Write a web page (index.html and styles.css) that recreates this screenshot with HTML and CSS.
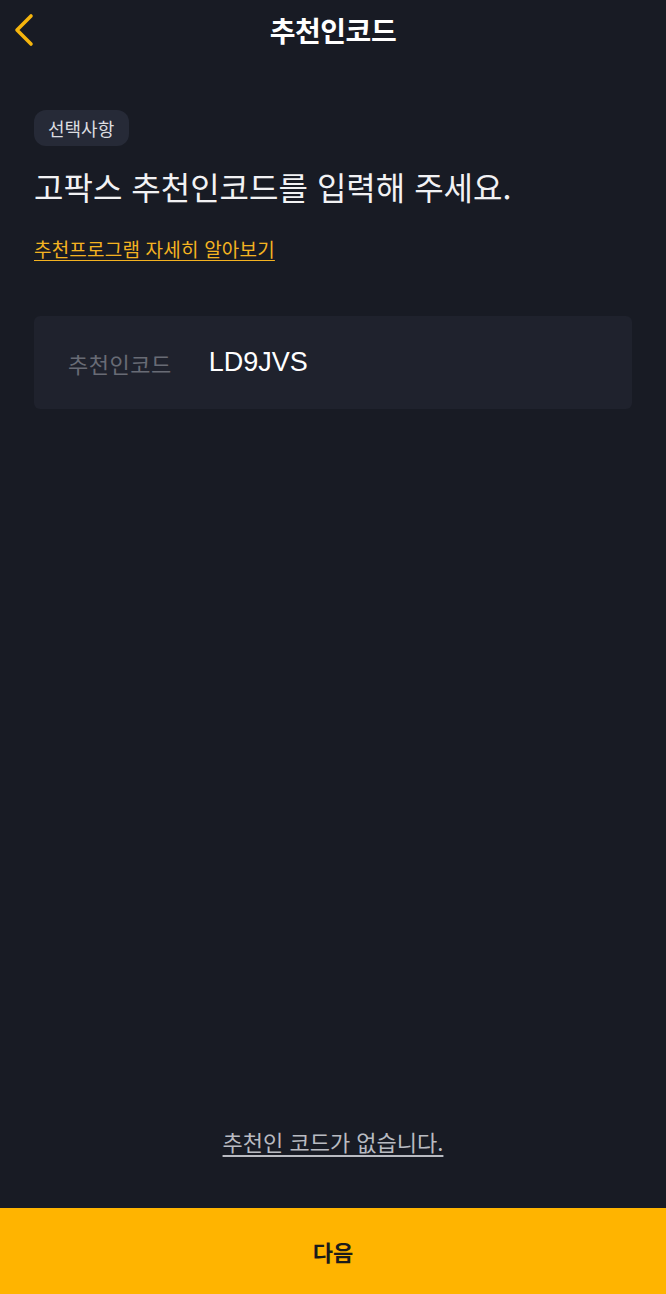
FILE: index.html
```html
<!DOCTYPE html>
<html lang="ko">
<head>
    <meta charset="UTF-8">
    <title>추천인코드</title>
    <link rel="stylesheet" href="styles.css">
</head>
<body>
    <div class="page">
        <!-- top bar -->
        <header class="topbar">
            <a class="back" href="#">
                <svg width="22" height="34" viewBox="0 0 22 34">
                    <path d="M18 3 L4 17 L18 31" fill="none" stroke="#f5b50d" stroke-width="3.6" stroke-linecap="round" stroke-linejoin="round"/>
                </svg>
            </a>
            <h1 class="title">추천인코드</h1>
        </header>

        <main class="content">
            <span class="badge">선택사항</span>
            <h2 class="heading">고팍스 추천인코드를 입력해 주세요.</h2>
            <a class="more" href="#">추천프로그램 자세히 알아보기</a>

            <div class="field">
                <span class="field-label">추천인코드</span>
                <span class="field-value">LD9JVS</span>
            </div>
        </main>

        <a class="skip" href="#">추천인 코드가 없습니다.</a>
        <button class="next" type="button">다음</button>
    </div>
</body>
</html>
```

FILE: styles.css
```css
html, body {
    margin: 0;
    padding: 0;
    background-color: #181b24;
}

body {
    font-family: "Noto Sans CJK KR", "Noto Sans", sans-serif;
    color: #ffffff;
}

.page {
    height: 1294px;
    display: flex;
    flex-direction: column;
}

.topbar {
    height: 60px;
    display: flex;
    align-items: center;
    justify-content: center;
    position: relative;
}

.back {
    position: absolute;
    left: 13px;
    top: 13px;
    display: block;
}

.title {
    margin: 0;
    font-size: 28px;
    font-weight: 700;
    line-height: 36px;
    letter-spacing: -0.5px;
    color: #ffffff;
}

.content {
    padding: 50px 34px 0;
    display: flex;
    flex-direction: column;
    align-items: flex-start;
    flex: 1;
}

.badge {
    height: 36px;
    line-height: 36px;
    padding: 0 15px 0 14px;
    border-radius: 12px;
    background-color: #262a37;
    color: #dcdde0;
    font-size: 18px;
}

.heading {
    margin: 20px 0 0;
    font-size: 32px;
    font-weight: 400;
    line-height: 40px;
    color: #f2f2f4;
}

.more {
    margin-top: 30px;
    font-size: 19px;
    line-height: 26px;
    color: #f4b321;
    text-decoration: underline;
    text-underline-offset: 3px;
    letter-spacing: 0.2px;
}

.field {
    margin-top: 54px;
    align-self: stretch;
    height: 93px;
    border-radius: 6px;
    background-color: #1f222d;
    display: flex;
    align-items: center;
    padding: 0 34px;
    gap: 37px;
}

.field-label {
    font-size: 22px;
    color: #686b75;
    letter-spacing: 0.5px;
}

.field-value {
    font-family: "Liberation Sans", "Noto Sans", sans-serif;
    font-size: 27px;
    color: #ffffff;
}

.skip {
    align-self: center;
    font-size: 22px;
    line-height: 28px;
    color: #b9bbc2;
    text-decoration: underline;
    text-underline-offset: 4px;
    margin-bottom: 53px;
}

.next {
    height: 86px;
    border: none;
    background-color: #ffb400;
    color: #1b1b1b;
    font-family: "Noto Sans CJK KR", sans-serif;
    font-size: 22px;
    font-weight: 700;
}
```
